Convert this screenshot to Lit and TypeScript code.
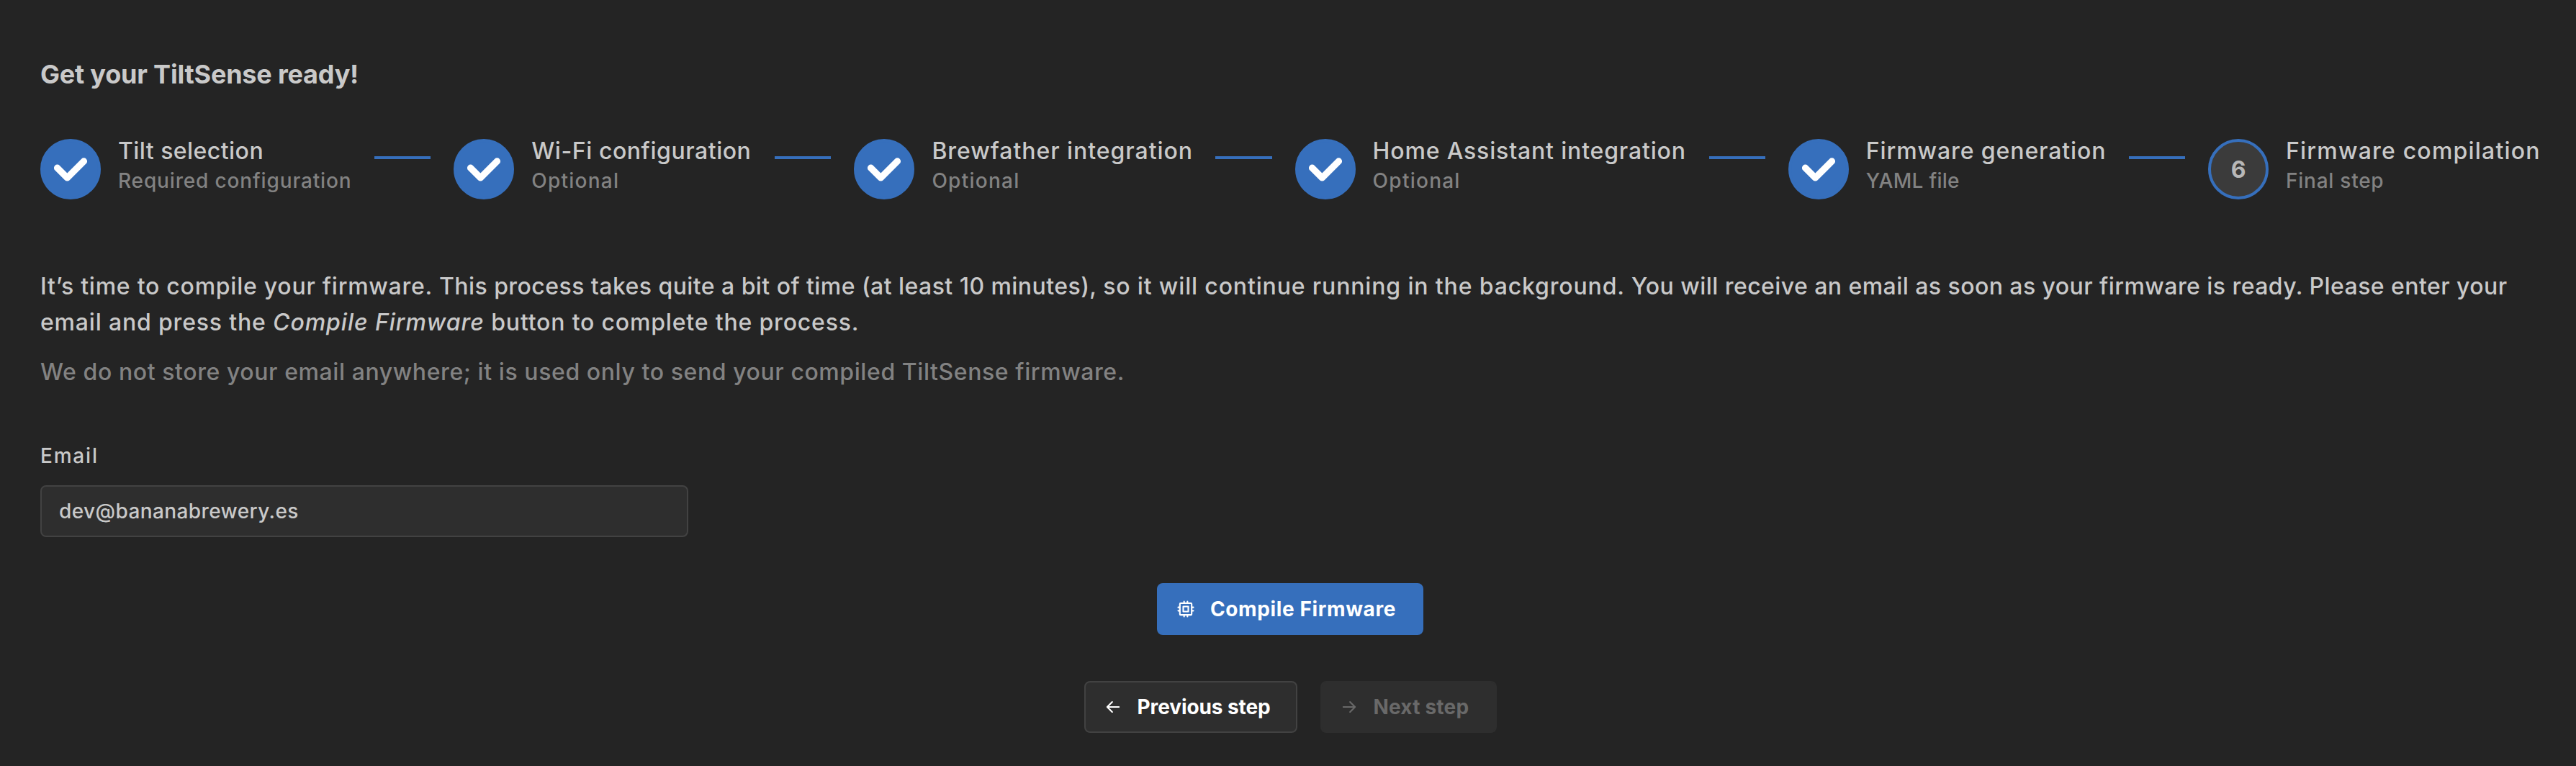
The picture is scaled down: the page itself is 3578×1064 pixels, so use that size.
import { LitElement, html, css, svg, nothing } from "lit";
import { customElement, property } from "lit/decorators.js";

const check = svg`<path d="M4 4.586L1.707 2.293A1 1 0 1 0 .293 3.707l3 3a.997.997 0 0 0 1.414 0l5-5A1 1 0 1 0 8.293.293L4 4.586z" fill="#fff"/>`;
const cpu = svg`<path d="M5 6a1 1 0 0 1 1-1h12a1 1 0 0 1 1 1v12a1 1 0 0 1-1 1H6a1 1 0 0 1-1-1zM9 9h6v6H9zM3 10h2M3 14h2M10 3v2M14 3v2M21 10h-2M21 14h-2M14 21v-2M10 21v-2"/>`;
const arrowLeft = svg`<path d="M5 12h14M5 12l6 6M5 12l6-6"/>`;
const arrowRight = svg`<path d="M5 12h14M13 18l6-6M13 6l6 6"/>`;

interface Step {
  label: string;
  description: string;
  width: number;
  labelSpacing: number;
  descriptionSpacing: number;
  done: boolean;
}

const steps: Step[] = [
  { label: "Tilt selection", description: "Required configuration", width: 324, labelSpacing: 0.45, descriptionSpacing: 0.85, done: true },
  { label: "Wi-Fi configuration", description: "Optional", width: 306, labelSpacing: 0.55, descriptionSpacing: 1.25, done: true },
  { label: "Brewfather integration", description: "Optional", width: 362, labelSpacing: 0.95, descriptionSpacing: 1.25, done: true },
  { label: "Home Assistant integration", description: "Optional", width: 435, labelSpacing: 0.83, descriptionSpacing: 1.25, done: true },
  { label: "Firmware generation", description: "YAML file", width: 333, labelSpacing: 0.9, descriptionSpacing: 0.3, done: true },
  { label: "Firmware compilation", description: "Final step", width: 353, labelSpacing: 1.2, descriptionSpacing: 0.75, done: false },
];

@customElement("wizard-step")
class WizardStep extends LitElement {
  @property({ attribute: false }) step!: Step;
  @property({ type: Number }) number = 0;
  static styles = css`
    :host { display: flex; flex: none; gap: 24px; }
    .icon { flex: none; width: 84px; height: 84px; box-sizing: border-box; border-radius: 50%; border: 4px solid #366fbc; background: #3b3b3b; color: #b8b8b8; display: flex; align-items: center; justify-content: center; font-size: 32px; font-weight: 700; }
    .done { background: #366fbc; }
    .done svg { width: 46px; height: 33px; }
    .label { font-size: 32px; line-height: 32px; margin-top: 1px; color: #c9c9c9; white-space: nowrap; }
    .desc { font-size: 28px; line-height: 28px; margin-top: 11px; color: #828282; white-space: nowrap; }
  `;
  render() {
    const s = this.step;
    return html`<div class="icon ${s.done ? "done" : ""}">${s.done ? html`<svg viewBox="0 0 10 7">${check}</svg>` : this.number}</div>
      <div style="width:${s.width}px">
        <div class="label" style="letter-spacing:${s.labelSpacing}px">${s.label}</div>
        <div class="desc" style="letter-spacing:${s.descriptionSpacing}px">${s.description}</div>
      </div>`;
  }
}

@customElement("app-root")
class AppRoot extends LitElement {
  static styles = css`
    :host { display: block; height: 1064px; box-sizing: border-box; background: #242424; color: #c9c9c9; font-family: Inter, sans-serif; font-weight: 500; padding: 80px 50px 0 56px; overflow: hidden; }
    h1 { margin: 0; font-size: 36px; line-height: 47px; padding-bottom: 1px; font-weight: 650; letter-spacing: -0.2px; }
    .steps { display: flex; margin-top: 65px; height: 84px; }
    .line { flex: 1; height: 4px; margin: 24px 32px; background: #366fbc; }
    .intro { margin: 96px 0 0; font-size: 32px; line-height: 50px; white-space: nowrap; letter-spacing: 0.44px; }
    .wide { letter-spacing: 0.75px; }
    .wider { letter-spacing: 0.85px; }
    .second { letter-spacing: 0.82px; }
    .second em { letter-spacing: 0.95px; }
    .dim { color: #828282; margin: 19px 0 0; font-size: 32px; line-height: 50px; letter-spacing: 0.58px; }
    .field { display: flex; flex-direction: column; gap: 20px; margin-top: 71px; width: 900px; }
    label { font-size: 28px; line-height: 41px; letter-spacing: 1.8px; }
    input { height: 72px; box-sizing: border-box; margin: 0; padding: 0 24px; border: 2px solid #424242; border-radius: 8px; background: #2e2e2e; color: #c9c9c9; font: 500 28px Inter, sans-serif; letter-spacing: 0.4px; outline: none; }
    .actions { display: flex; justify-content: center; gap: 32px; margin-top: 64px; width: 3472px; }
    button { height: 72px; box-sizing: border-box; display: flex; align-items: center; gap: 20px; margin: 0; padding: 0 0 0 24px; border: 2px solid #424242; border-radius: 8px; background: #2e2e2e; color: #fff; font: 700 28px Inter, sans-serif; white-space: nowrap; }
    button svg { flex: none; width: 28px; height: 28px; fill: none; stroke: currentColor; stroke-width: 1.8; stroke-linecap: round; stroke-linejoin: round; }
    .compile { width: 370px; background: #366fbc; border-color: #366fbc; letter-spacing: 0.62px; }
    .prev { width: 296px; letter-spacing: -0.1px; }
    .next { width: 245px; border-color: #2e2e2e; color: #696969; letter-spacing: 0.2px; }
  `;
  render() {
    return html`
      <h1>Get your TiltSense ready!</h1>
      <div class="steps">
        ${steps.map((s, i) => html`${i ? html`<div class="line"></div>` : nothing}<wizard-step .step=${s} .number=${i + 1}></wizard-step>`)}
      </div>
      <p class="intro"><span class="wide">It’s time to compile your firmware. </span>This process takes quite a bit of time (at least 10 minutes), <span class="wider">so it will continue running in the background. </span>You will receive an email as soon as your firmware is ready. Please enter your<br /><span class="second">email and press the <em>Compile Firmware</em> button to complete the process.</span></p>
      <p class="dim">We do not store your email anywhere; it is used only to send your compiled TiltSense firmware.</p>
      <div class="field">
        <label for="email">Email</label>
        <input id="email" type="email" .value=${"dev@bananabrewery.es"} />
      </div>
      <div class="actions"><button class="compile"><svg viewBox="0 0 24 24">${cpu}</svg>Compile Firmware</button></div>
      <div class="actions">
        <button class="prev"><svg viewBox="0 0 24 24">${arrowLeft}</svg>Previous step</button>
        <button class="next" disabled><svg viewBox="0 0 24 24">${arrowRight}</svg>Next step</button>
      </div>`;
  }
}
